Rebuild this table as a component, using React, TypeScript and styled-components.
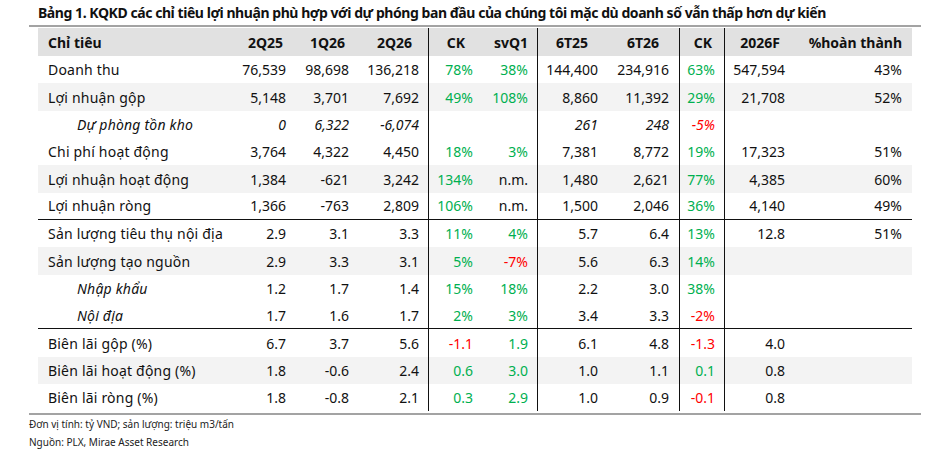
import styled, { createGlobalStyle } from "styled-components";

const GlobalStyle = createGlobalStyle`
  html, body {
    margin: 0;
    padding: 0;
    background: #ffffff;
  }
  body {
    font-family: "Noto Sans", "Open Sans", sans-serif;
    color: #111;
  }
`;

type Tone = "g" | "r" | undefined;
type Value = string | [string, Tone];

interface Col {
  head: string;
  width: number;
  pad: number;
  headPad: number;
  line?: boolean;
}

const cols: Col[] = [
  { head: "2Q25", width: 60, pad: 4, headPad: 7 },
  { head: "1Q26", width: 62, pad: 3, headPad: 7 },
  { head: "2Q26", width: 76, pad: 9, headPad: 16 },
  { head: "CK", width: 50, pad: 5, headPad: 13, line: true },
  { head: "svQ1", width: 59, pad: 9, headPad: 9 },
  { head: "6T25", width: 66, pad: 5, headPad: 15, line: true },
  { head: "6T26", width: 76, pad: 10, headPad: 20 },
  { head: "CK", width: 45, pad: 9, headPad: 12, line: true },
  { head: "2026F", width: 66, pad: 5, headPad: 10, line: true },
  { head: "%hoàn thành", width: 122, pad: 10, headPad: 10 },
];

const template = `192px ${cols.map((c) => `${c.width}px`).join(" ")}`;

interface RowData {
  label: string;
  values: Value[];
  indent?: boolean;
  italic?: boolean;
  shade?: boolean;
  rule?: boolean;
}

const rows: RowData[] = [
  {
    label: "Doanh thu",
    values: ["76,539", "98,698", "136,218", ["78%", "g"], ["38%", "g"], "144,400", "234,916", ["63%", "g"], "547,594", "43%"],
  },
  {
    label: "Lợi nhuận gộp",
    shade: true,
    values: ["5,148", "3,701", "7,692", ["49%", "g"], ["108%", "g"], "8,860", "11,392", ["29%", "g"], "21,708", "52%"],
  },
  {
    label: "Dự phòng tồn kho",
    indent: true,
    italic: true,
    values: ["0", "6,322", "-6,074", "", "", "261", "248", ["-5%", "r"], "", ""],
  },
  {
    label: "Chi phí hoạt động",
    values: ["3,764", "4,322", "4,450", ["18%", "g"], ["3%", "g"], "7,381", "8,772", ["19%", "g"], "17,323", "51%"],
  },
  {
    label: "Lợi nhuận hoạt động",
    shade: true,
    values: ["1,384", "-621", "3,242", ["134%", "g"], "n.m.", "1,480", "2,621", ["77%", "g"], "4,385", "60%"],
  },
  {
    label: "Lợi nhuận ròng",
    rule: true,
    values: ["1,366", "-763", "2,809", ["106%", "g"], "n.m.", "1,500", "2,046", ["36%", "g"], "4,140", "49%"],
  },
  {
    label: "Sản lượng tiêu thụ nội địa",
    values: ["2.9", "3.1", "3.3", ["11%", "g"], ["4%", "g"], "5.7", "6.4", ["13%", "g"], "12.8", "51%"],
  },
  {
    label: "Sản lượng tạo nguồn",
    shade: true,
    values: ["2.9", "3.3", "3.1", ["5%", "g"], ["-7%", "r"], "5.6", "6.3", ["14%", "g"], "", ""],
  },
  {
    label: "Nhập khẩu",
    indent: true,
    values: ["1.2", "1.7", "1.4", ["15%", "g"], ["18%", "g"], "2.2", "3.0", ["38%", "g"], "", ""],
  },
  {
    label: "Nội địa",
    indent: true,
    rule: true,
    values: ["1.7", "1.6", "1.7", ["2%", "g"], ["3%", "g"], "3.4", "3.3", ["-2%", "r"], "", ""],
  },
  {
    label: "Biên lãi gộp (%)",
    values: ["6.7", "3.7", "5.6", ["-1.1", "r"], ["1.9", "g"], "6.1", "4.8", ["-1.3", "r"], "4.0", ""],
  },
  {
    label: "Biên lãi hoạt động (%)",
    shade: true,
    values: ["1.8", "-0.6", "2.4", ["0.6", "g"], ["3.0", "g"], "1.0", "1.1", ["0.1", "g"], "0.8", ""],
  },
  {
    label: "Biên lãi ròng (%)",
    values: ["1.8", "-0.8", "2.1", ["0.3", "g"], ["2.9", "g"], "1.0", "0.9", ["-0.1", "r"], "0.8", ""],
  },
];

const Page = styled.div`
  width: 931px;
  height: 451px;
  padding: 3px 0 0 29px;
  box-sizing: border-box;
  overflow: hidden;
`;

const Title = styled.h1`
  margin: 0 0 0 9px;
  font-size: 14px;
  line-height: 19px;
  font-weight: 700;
  letter-spacing: -0.44px;
  color: #111;
  white-space: nowrap;
`;

const Rule = styled.div<{ $top: number }>`
  width: 892px;
  height: 2px;
  margin-top: ${(p) => p.$top}px;
  background: #a3a3a3;
`;

const Table = styled.div`
  margin: 1px 0 0 9px;
  width: 874px;
`;

const Row = styled.div<{ $shade?: boolean; $rule?: boolean; $head?: boolean }>`
  display: grid;
  grid-template-columns: ${template};
  height: ${(p) => (p.$head ? 28 : 27.35)}px;
  box-sizing: border-box;
  background: ${(p) => (p.$head ? "#e1e1e1" : p.$shade ? "#f3f3f3" : "transparent")};
  border-bottom: ${(p) => (p.$rule ? "1px solid #111" : "none")};
  font-weight: ${(p) => (p.$head ? 700 : 400)};
`;

const Label = styled.div<{ $indent?: boolean; $italic?: boolean; $head?: boolean }>`
  display: flex;
  align-items: center;
  padding-left: ${(p) => (p.$indent ? 39 : 10)}px;
  font-size: 14px;
  letter-spacing: ${(p) => (p.$head ? 0 : 0.2)}px;
  font-style: ${(p) => (p.$italic ? "italic" : "normal")};
  white-space: nowrap;
`;

const Cell = styled.div<{ $pad: number; $line?: boolean; $tone?: Tone; $italic?: boolean }>`
  display: flex;
  align-items: center;
  justify-content: flex-end;
  padding-right: ${(p) => p.$pad}px;
  border-left: ${(p) => (p.$line ? "1px solid #111" : "none")};
  font-size: 14px;
  font-style: ${(p) => (p.$italic ? "italic" : "normal")};
  color: ${(p) => (p.$tone === "g" ? "#00b050" : p.$tone === "r" ? "#ff0000" : "#111")};
  white-space: nowrap;
`;

const Notes = styled.div`
  margin-top: 1px;
  font-size: 10px;
  line-height: 17.5px;
  color: #222;
`;

export default function App() {
  return (
    <>
      <GlobalStyle />
      <Page>
        <Title>
          Bảng 1. KQKD các chỉ tiêu lợi nhuận phù hợp với dự phóng ban đầu của chúng tôi mặc dù
          doanh số vẫn thấp hơn dự kiến
        </Title>
        <Rule $top={3} />
        <Table>
          <Row $head>
            <Label $head>Chỉ tiêu</Label>
            {cols.map((c, i) => (
              <Cell key={i} $pad={c.headPad} $line={c.line}>
                {c.head}
              </Cell>
            ))}
          </Row>
          {rows.map((r) => (
            <Row key={r.label} $shade={r.shade} $rule={r.rule}>
              <Label $indent={r.indent} $italic={r.indent}>
                {r.label}
              </Label>
              {r.values.map((v, i) => {
                const [text, tone] = typeof v === "string" ? [v, undefined] : v;
                return (
                  <Cell key={i} $pad={cols[i].pad} $line={cols[i].line} $tone={tone} $italic={r.italic}>
                    {text}
                  </Cell>
                );
              })}
            </Row>
          ))}
        </Table>
        <Rule $top={2} />
        <Notes>
          <div>Đơn vị tính: tỷ VND; sản lượng: triệu m3/tấn</div>
          <div>Nguồn: PLX, Mirae Asset Research</div>
        </Notes>
      </Page>
    </>
  );
}
